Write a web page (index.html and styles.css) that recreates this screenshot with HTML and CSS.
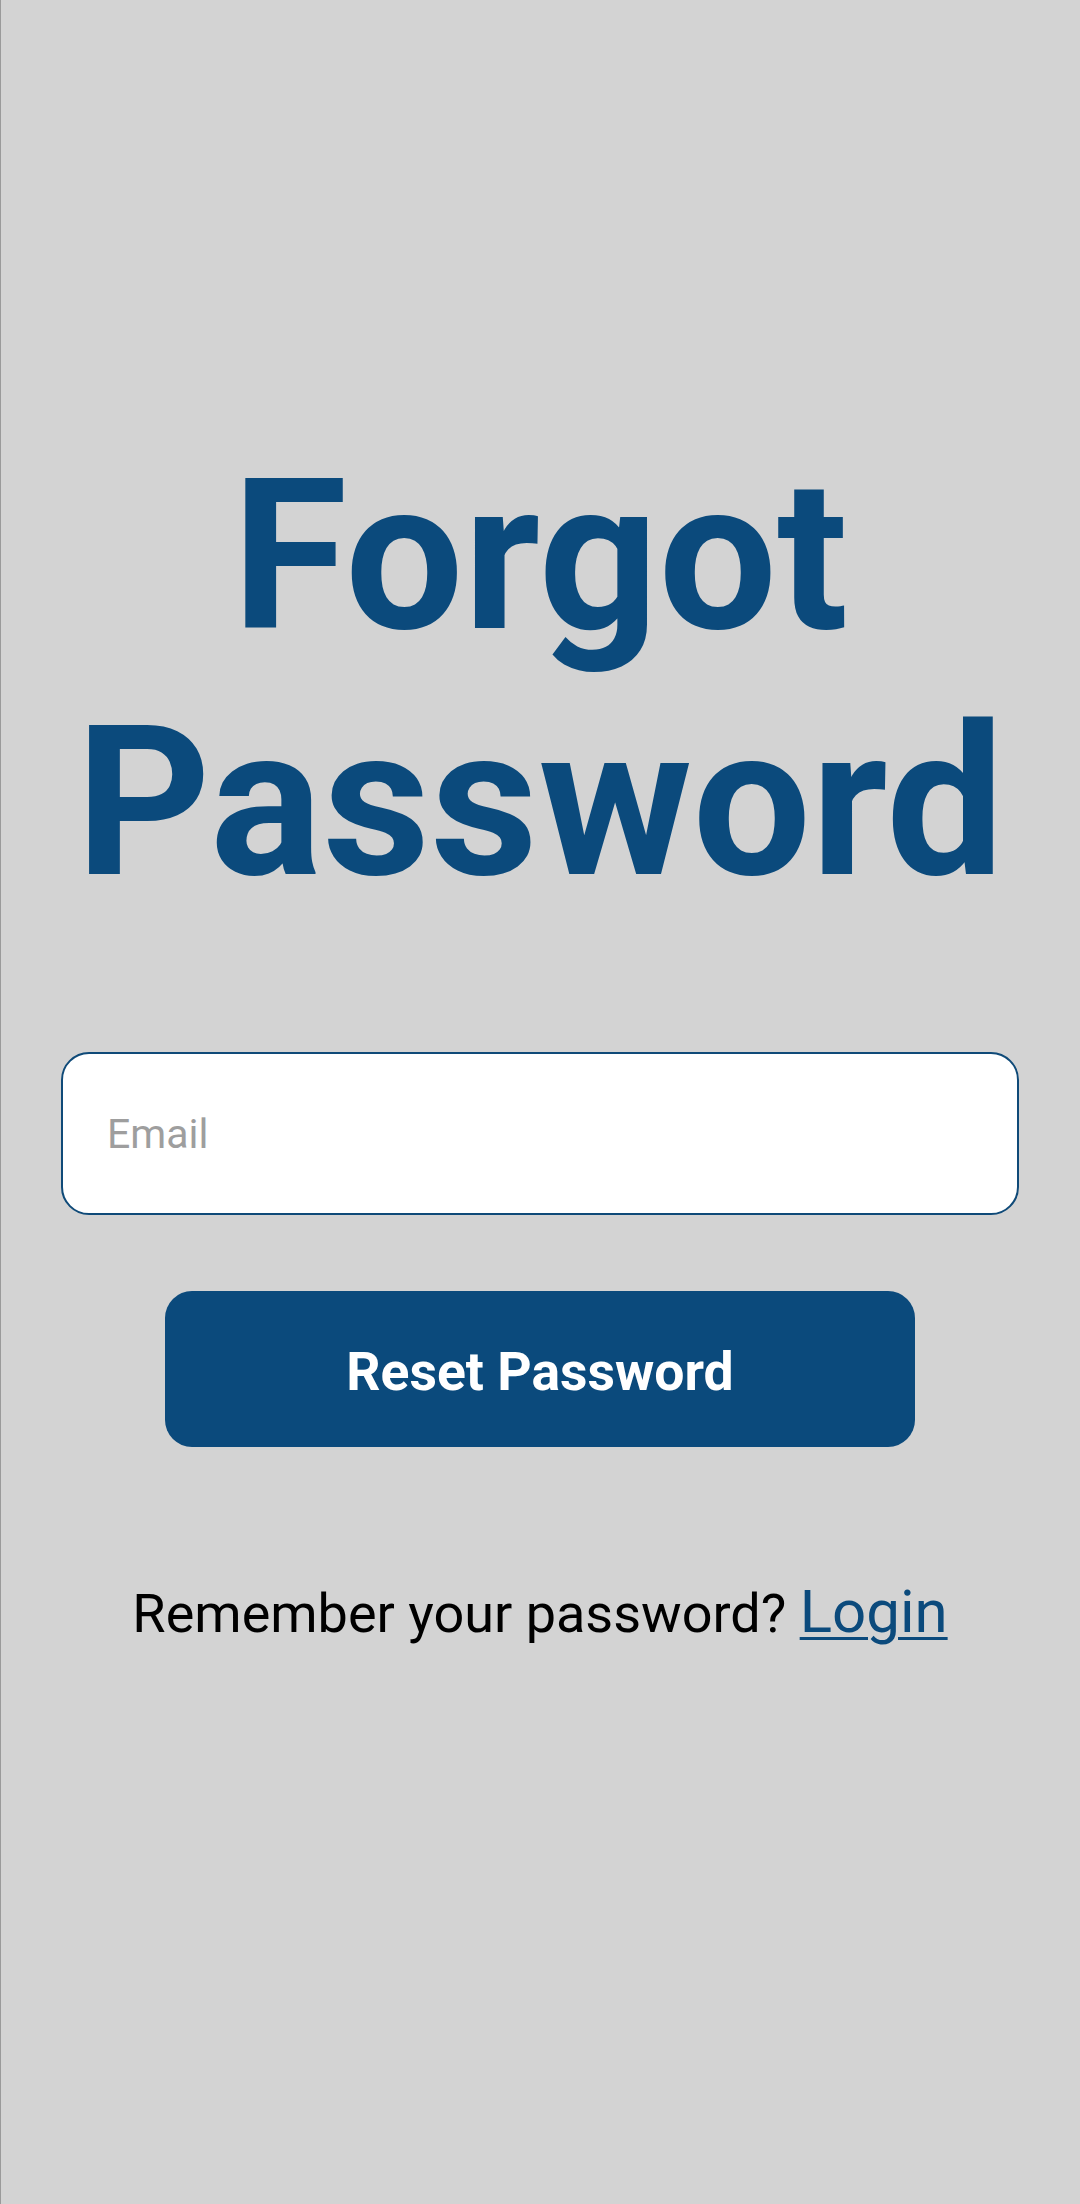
FILE: index.html
```html
<!DOCTYPE html>
<html lang="en">
<head>
<meta charset="utf-8">
<title>Forgot Password</title>
<link rel="stylesheet" href="styles.css">
</head>
<body>
<main class="screen">
  <h1 class="title">Forgot<br>Password</h1>
  <input class="email" type="email" placeholder="Email">
  <button class="reset" type="button">Reset Password</button>
  <p class="remember">Remember your password? <a class="login" href="#">Login</a></p>
</main>
</body>
</html>
```
FILE: styles.css
```css
html, body {
  margin: 0;
  padding: 0;
}
body {
  background: #d3d3d3;
  width: 1080px;
  min-height: 2204px;
  box-sizing: border-box;
  box-shadow: inset 1px 0 0 #9a9a9a;
  font-family: Roboto, "Liberation Sans", sans-serif;
}
.screen {
  display: flex;
  flex-direction: column;
  align-items: center;
  padding: 433px 60px 0 60px;
}
.title {
  margin: 0;
  font-size: 210px;
  line-height: 246px;
  font-weight: 700;
  color: #0b4a7c;
  text-align: center;
}
.email {
  margin-top: 127px;
  width: 958px;
  height: 163px;
  box-sizing: border-box;
  border: 2px solid #0f4a78;
  border-radius: 28px;
  background: #ffffff;
  padding: 0 0 0 44px;
  font-family: Roboto, "Liberation Sans", sans-serif;
  font-size: 41px;
  color: #222;
  outline: none;
}
.email::placeholder {
  color: #9e9e9e;
}
.reset {
  margin-top: 76px;
  width: 750px;
  height: 156px;
  border: none;
  border-radius: 27px;
  background: #0b4a7c;
  color: #ffffff;
  font-family: Roboto, "Liberation Sans", sans-serif;
  font-size: 53.5px;
  font-weight: 700;
  padding: 0;
  padding-top: 4px;
}
.remember {
  margin: 130px 0 0 0;
  font-size: 54px;
  line-height: 70px;
  color: #000000;
  text-align: center;
}
.login {
  font-size: 60px;
  color: #0b4a7c;
  text-decoration: underline;
  text-decoration-thickness: 3px;
  text-underline-offset: 5px;
}
```
